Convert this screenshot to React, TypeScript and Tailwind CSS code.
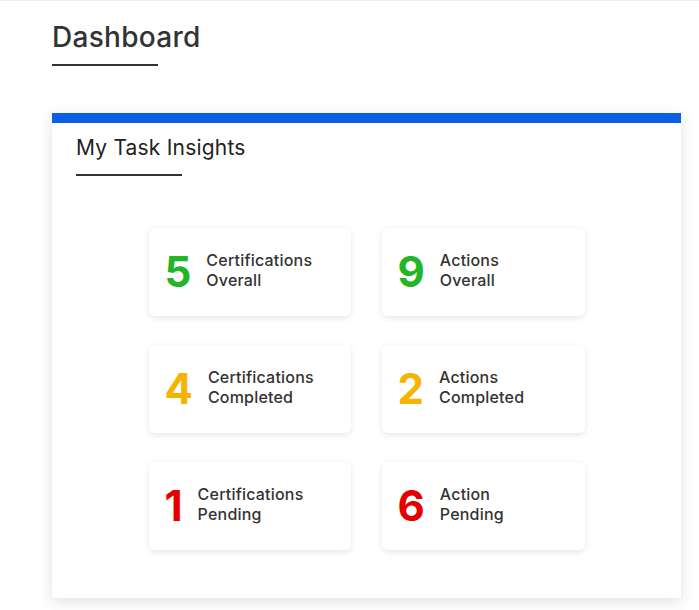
import React from "react";

interface Insight {
  value: number;
  line1: string;
  line2: string;
  color: string;
}

const insights: Insight[] = [
  { value: 5, line1: "Certifications", line2: "Overall", color: "text-[#22b526]" },
  { value: 9, line1: "Actions", line2: "Overall", color: "text-[#22b526]" },
  { value: 4, line1: "Certifications", line2: "Completed", color: "text-[#f6b400]" },
  { value: 2, line1: "Actions", line2: "Completed", color: "text-[#f6b400]" },
  { value: 1, line1: "Certifications", line2: "Pending", color: "text-[#e50000]" },
  { value: 6, line1: "Action", line2: "Pending", color: "text-[#e50000]" },
];

function InsightTile({ item }: { item: Insight }) {
  return (
    <div className="h-[88px] rounded-md bg-white shadow-[0_2px_6px_rgba(0,0,0,0.1)] flex items-center gap-[15px] pl-[16px]">
      <span className={`text-[42px] font-bold leading-none ${item.color}`}>{item.value}</span>
      <div className="text-[16px] font-medium leading-[20px] tracking-[0.2px] text-[#333] -mt-[4px]">
        <div>{item.line1}</div>
        <div>{item.line2}</div>
      </div>
    </div>
  );
}

export default function App() {
  return (
    <div
      className="min-h-screen bg-white border-t border-[#f0f0f0] pl-[52px] pr-[18px] pt-[19px]"
      style={{ fontFamily: "Inter, 'Liberation Sans', sans-serif" }}
    >
      {/* Page title */}
      <h1 className="text-[28px] font-medium leading-[34px] tracking-[0.3px] text-[#333]">Dashboard</h1>
      <div className="mt-[10px] h-[2px] w-[106px] bg-[#333]" />

      {/* Task insights card */}
      <div className="mt-[47px] bg-white shadow-[0_4px_14px_rgba(0,0,0,0.12)]">
        <div className="h-[10px] bg-[#0b5ee6]" />
        <div className="px-[24px] pt-[11px] pb-[48px]">
          <h2 className="text-[21px] font-normal leading-[28px] tracking-[0.2px] text-[#222]">My Task Insights</h2>
          <div className="mt-[12px] h-[2px] w-[106px] bg-[#333]" />

          <div className="mt-[52px] grid grid-cols-[202px_203px] gap-x-[31px] gap-y-[29px] justify-center">
            {insights.map((item, i) => (
              <InsightTile key={i} item={item} />
            ))}
          </div>
        </div>
      </div>
    </div>
  );
}
